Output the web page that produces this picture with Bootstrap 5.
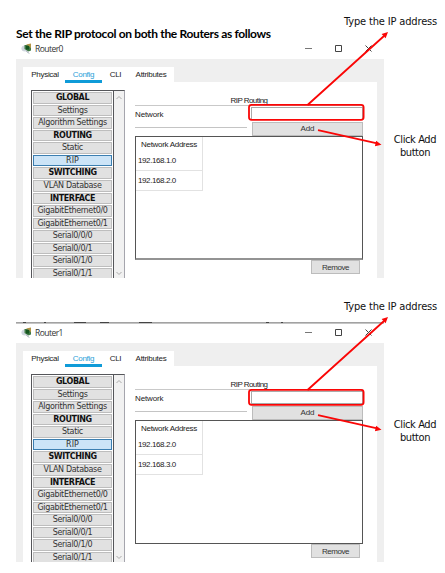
<!DOCTYPE html>
<html lang="en">
<head>
<meta charset="utf-8">
<meta name="viewport" content="width=device-width, initial-scale=1">
<title>RIP configuration</title>
<link href="https://cdn.jsdelivr.net/npm/bootstrap@5.3.0/dist/css/bootstrap.min.css" rel="stylesheet">
<style>
body{width:445px;height:573px;overflow:hidden;background:#fff;color:#222;font:8px/10px "Liberation Sans",Arial,sans-serif;letter-spacing:-.3px}
.scene{height:284px;padding-left:16px}
.scene-head{height:42px;padding-top:27px}
.scene-head h1{font:700 12px/14px Lato,"Open Sans",sans-serif;color:#000;margin:0;letter-spacing:-.34px;white-space:nowrap}
.second .scene-head{padding-top:38px}
.edge{width:368px;height:2px;background:#c4c4c4}
.edge svg{display:block}
.win{width:368px;height:236px}
.titlebar{height:17px;padding-left:5px}
.titlebar span{font:8.5px/14px "Open Sans","Noto Sans",sans-serif;color:#333;margin-left:3px;letter-spacing:-.55px}
.frame{height:219px;background:#efefef;padding:8px 7px 0}
.tabs{width:151px;height:15px;background:#fff}
.tab-item{font-size:8px;line-height:15px;height:15px;text-align:center;white-space:nowrap;color:#222}
.tab-item:first-child{padding-left:2px}
.tab-item:nth-child(3){padding-left:1px}
.tab-item.on{color:#2ba0d8;border-bottom:3px solid #0f9bd8;height:16px;position:relative}
.pane{height:196px;background:#fff;padding:8px 0 0 8px}
.side{width:94px;height:188px;border:1px solid #55565a;border-bottom:0;border-right-color:#a5a5ad;overflow:hidden}
.menu{width:82px;padding-top:1px;border-right:1px solid #55565a}
.entry{height:11.57px;margin:0 1px 1px;border:1px solid #bdbdbd;background:#e1e1e1;font:8px/10.4px "DejaVu Sans",Verdana,sans-serif;letter-spacing:-.33px;color:#333;text-align:center;white-space:nowrap}
.entry.hd{font-weight:700;color:#111;letter-spacing:-.4px}
.entry.sel{background:#cce4f7;border-color:#3c7fb1;letter-spacing:.1px}
.scroller{width:10px;background:#f1f1f1;padding:4px 0 2px}
.work{width:228px;margin-left:10px}
.rip-title{height:16px;padding-top:6px;text-align:center;border-bottom:1px solid #c9c9c9;line-height:10px;letter-spacing:-.55px}
.rule{width:112px;border-bottom:1px solid #c4c4c4;height:22px;padding-top:4px;letter-spacing:-.15px}
.field{width:112px;height:13px;margin-top:1px;border:1px solid #aaa;background:#fff}
.gray-btn{background:#e1e1e1;border:1px solid #bcbcbc;color:#333;text-align:center}
.add{width:111px;height:14px;line-height:12px;margin:2px 0 0 1px;letter-spacing:-.15px}
.nets{width:228px;height:124px;border:1px solid #555}
.first .nets{border-bottom:2px solid #939393}
.cells{width:67px;border-right:1px solid #e2e2e2}
.cells div{height:20px;line-height:20px;padding-left:2px;border-bottom:1px solid #e2e2e2;white-space:nowrap;letter-spacing:-.4px}
.cells .top{height:14px;line-height:15px;padding-left:5px;border:0;letter-spacing:-.3px}
.remove{width:49px;height:14px;line-height:13px;margin-left:176px;letter-spacing:-.5px}
.notes{left:0;top:0;width:445px;height:284px;color:#111;font:11px/13px "DejaVu Sans Condensed","DejaVu Sans",Tahoma,sans-serif;font-stretch:condensed;letter-spacing:-.15px;pointer-events:none}
.second .notes{top:1px}
.notes svg{left:0;top:0}
.ip-note{left:344px;top:15px;white-space:nowrap}
.add-note{left:388px;top:133px;width:54px;text-align:center;letter-spacing:-.4px}
</style>
<script src="https://cdn.jsdelivr.net/npm/bootstrap@5.3.0/dist/js/bootstrap.bundle.min.js"></script>
</head>
<body>
<main id="scenes"></main>
<template id="scene-template">
<section class="scene position-relative">
  <div class="scene-head"></div>
  <div class="win">
    <div class="titlebar d-flex">
      <svg width="11" height="13" viewBox="0 0 11 13"><ellipse cx="4" cy="6.500" rx="3.600" ry="3" fill="#cfd6de"/><path d="M3.500 3h6.500v5.500l-2.500 1-4-2.500z" fill="#3f7845"/><path d="M5 4h3v3.500H5z" fill="#14551e"/><path d="M5 2.500l5-1v5L8 4z" fill="#b39445"/><path d="M5.500 9l2.500 2.500" stroke="#8893a0"/></svg>
      <span class="router"></span>
      <svg class="ms-auto" width="87" height="16" viewBox="297 42 87 16" fill="none" stroke="#444"><path d="M305 48.500h7" stroke="#777"/><path d="M335.500 45.500h6v6h-6z"/><path d="M365.500 45.500l6 6m0-6l-6 6"/></svg>
    </div>
    <div class="frame">
      <nav class="tabs d-flex">
        <div class="tab-item" style="width:42px">Physical</div>
        <div class="tab-item on" style="width:37px">Config</div>
        <div class="tab-item" style="width:26px">CLI</div>
        <div class="tab-item" style="width:46px">Attributes</div>
      </nav>
      <div class="pane d-flex">
        <div class="side d-flex">
          <div class="menu"></div>
          <div class="scroller d-flex flex-column justify-content-between align-items-center">
            <svg width="6" height="5" fill="none" stroke="#aaa"><path d="M.5 4L3 1.5 5.5 4"/></svg>
            <svg width="6" height="5" fill="none" stroke="#aaa"><path d="M.5 1L3 3.5 5.5 1"/></svg>
          </div>
        </div>
        <div class="work">
          <div class="rip-title"><span>RIP Routing</span></div>
          <div class="d-flex justify-content-between">
            <div class="rule">Network</div>
            <div><div class="field"></div><div class="add gray-btn">Add</div></div>
          </div>
          <div class="nets"><div class="cells"><div class="top">Network Address</div><div class="net-a"></div><div class="net-b"></div></div></div>
          <div class="remove gray-btn">Remove</div>
        </div>
      </div>
    </div>
  </div>
  <div class="notes position-absolute">
    <svg class="position-absolute" width="445" height="284" fill="none" stroke="#fa0606" stroke-width="1.800">
      <rect x="249" y="104.800" width="114.600" height="15" rx="2.500"/>
      <path d="M307.500 105L384 36M318 130.200L376 143.200"/>
      <path d="M388 32l-2.400 6.200-4-4.200zM381.500 144.800l-6.600 1.400 1.200-5.400z" fill="#fa0606" stroke="none"/>
    </svg>
    <div class="ip-note position-absolute">Type the IP address</div>
    <div class="add-note position-absolute">Click Add<br>button</div>
  </div>
</section>
</template>
<script>
const menu = ["GLOBAL","Settings","Algorithm Settings","ROUTING","Static","RIP","SWITCHING","VLAN Database","INTERFACE","GigabitEthernet0/0","GigabitEthernet0/1","Serial0/0/0","Serial0/0/1","Serial0/1/0","Serial0/1/1"];
const heads = ["GLOBAL","ROUTING","SWITCHING","INTERFACE"];
const edge = '<div class="edge"><svg width="368" height="2"><path d="M0 .5h368" stroke="#a2a2a2"/><path d="M7 .5h3M28 .5h2M58 .5h12M84 .5h9M123 .5h13M250 .5h3M265 .5h2" stroke="#444"/></svg></div>';
const scenes = [
  {cls:"first", name:"Router0", nets:["192.168.1.0","192.168.2.0"], head:"<h1>Set the RIP protocol on both the Routers as follows</h1>"},
  {cls:"second", name:"Router1", nets:["192.168.2.0","192.168.3.0"], head:edge}
];
for (const s of scenes) {
  const n = document.getElementById("scene-template").content.cloneNode(true);
  n.querySelector(".scene").classList.add(s.cls);
  n.querySelector(".scene-head").innerHTML = s.head;
  n.querySelector(".router").textContent = s.name;
  n.querySelector(".net-a").textContent = s.nets[0];
  n.querySelector(".net-b").textContent = s.nets[1];
  n.querySelector(".menu").innerHTML = menu.map(m => `<div class="entry ${heads.includes(m) ? "hd" : m === "RIP" ? "sel" : ""}">${m}</div>`).join("");
  document.getElementById("scenes").append(n);
}
</script>
</body>
</html>
